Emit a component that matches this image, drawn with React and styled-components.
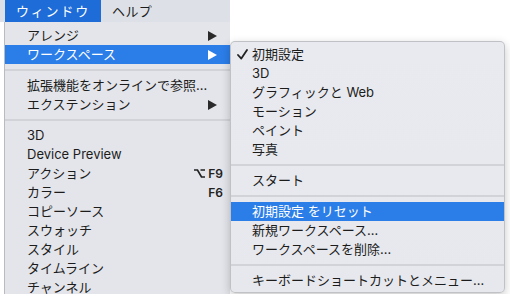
import React from "react";
import styled, { createGlobalStyle } from "styled-components";

const GlobalStyle = createGlobalStyle`
  html, body { margin: 0; padding: 0; background: #ffffff; }
  body {
    font-family: Inter, "Noto Sans CJK JP", "Liberation Sans", sans-serif;
    font-size: 13px;
    color: #1c1c1c;
    -webkit-font-smoothing: antialiased;
  }
`;

const Stage = styled.div`
  display: flex;
  align-items: flex-start;
  width: 510px;
  height: 294px;
  overflow: hidden;
`;

const LeftColumn = styled.div`
  width: 230px;
  flex: none;
  display: flex;
  flex-direction: column;
`;

const MenuBar = styled.div`
  height: 22px;
  display: flex;
  padding-left: 5px;
  background: #dde0e6;
`;

const MenuBarItem = styled.div`
  padding: 0 11px 0 11px;
  line-height: 22px;
  letter-spacing: ${(p) => (p.$active ? "1.8px" : "0.4px")};
  color: ${(p) => (p.$active ? "#ffffff" : "#1c1c1c")};
  background: ${(p) => (p.$active ? "#1d6cd8" : "transparent")};
`;

const Dropdown = styled.div`
  margin-left: 4px;
  border-left: 1px solid #b9bbc0;
  background: #e3e5ea;
  padding-top: 4px;
  height: 300px;
`;

const Submenu = styled.div`
  position: relative;
  width: 273px;
  flex: none;
  margin-top: 41px;
  background: linear-gradient(180deg, #e8eaef 0%, #e6e8ed 100%);
  border: 1px solid rgba(0, 0, 0, 0.17);
  border-radius: 5px;
  box-shadow: 0 3px 10px rgba(0, 0, 0, 0.22);
  padding: 3px 0 2px;
`;

const Item = styled.div`
  height: 19px;
  display: flex;
  align-items: center;
  padding-left: ${(p) => (p.$sub ? "6px" : "22px")};
  white-space: nowrap;
  color: ${(p) => (p.$hl ? "#ffffff" : "#1c1c1c")};
  background: ${(p) => (p.$hl ? "#2b7de8" : "transparent")};
`;

const Label = styled.span`
  flex: 1;
  line-height: 19px;
`;

const CheckSlot = styled.span`
  width: 15px;
  flex: none;
  display: flex;
  align-items: center;
`;

const ArrowIcon = styled.svg`
  flex: none;
  margin-right: 13px;
  fill: currentColor;
  color: ${(p) => (p.$hl ? "#ffffff" : "#2a2a2a")};
`;

const Shortcut = styled.span`
  flex: none;
  margin-right: 7px;
  display: flex;
  align-items: center;
  gap: 3px;
  font-family: Inter, "Liberation Sans", sans-serif;
  font-weight: 600;
  font-size: 12px;
  color: #222;
`;

const Separator = styled.div`
  height: 2px;
  margin: 5px 0;
  background: #d1d3d8;
`;

const Arrow = ({ hl }) => (
  <ArrowIcon $hl={hl} width="9" height="10" viewBox="0 0 9 10">
    <polygon points="0,0 9,5 0,10" />
  </ArrowIcon>
);

const Check = () => (
  <svg width="11" height="11" viewBox="0 0 11 11">
    <path d="M1 6 L4.3 9.6 L10 1" fill="none" stroke="#222" strokeWidth="1.8" strokeLinecap="round" strokeLinejoin="round" />
  </svg>
);

const OptionKey = () => (
  <svg width="11" height="9" viewBox="0 0 11 9">
    <path d="M0 1 H3.5 L7.5 8 H11 M6.5 1 H11" fill="none" stroke="#222" strokeWidth="1.7" />
  </svg>
);

const MenuItem = ({ label, arrow, hl, shortcut }) => (
  <Item $hl={hl}>
    <Label>{label}</Label>
    {shortcut && <Shortcut>{shortcut}</Shortcut>}
    {arrow && <Arrow hl={hl} />}
  </Item>
);

const SubItem = ({ label, checked, hl }) => (
  <Item $sub $hl={hl}>
    <CheckSlot>{checked && <Check />}</CheckSlot>
    <Label>{label}</Label>
  </Item>
);

export default function App() {
  return (
    <>
      <GlobalStyle />
      <Stage>
        <LeftColumn>
          <MenuBar>
            <MenuBarItem $active>ウィンドウ</MenuBarItem>
            <MenuBarItem>ヘルプ</MenuBarItem>
          </MenuBar>
          <Dropdown>
            <MenuItem label="アレンジ" arrow />
            <MenuItem label="ワークスペース" arrow hl />
            <Separator />
            <MenuItem label="拡張機能をオンラインで参照…" />
            <MenuItem label="エクステンション" arrow />
            <Separator />
            <MenuItem label="3D" />
            <MenuItem label="Device Preview" />
            <MenuItem label="アクション" shortcut={<><OptionKey /><span>F9</span></>} />
            <MenuItem label="カラー" shortcut={<span>F6</span>} />
            <MenuItem label="コピーソース" />
            <MenuItem label="スウォッチ" />
            <MenuItem label="スタイル" />
            <MenuItem label="タイムライン" />
            <MenuItem label="チャンネル" />
          </Dropdown>
        </LeftColumn>
        <Submenu>
          <SubItem label="初期設定" checked />
          <SubItem label="3D" />
          <SubItem label="グラフィックと Web" />
          <SubItem label="モーション" />
          <SubItem label="ペイント" />
          <SubItem label="写真" />
          <Separator />
          <SubItem label="スタート" />
          <Separator />
          <SubItem label="初期設定 をリセット" hl />
          <SubItem label="新規ワークスペース…" />
          <SubItem label="ワークスペースを削除…" />
          <Separator />
          <SubItem label="キーボードショートカットとメニュー…" />
        </Submenu>
      </Stage>
    </>
  );
}
